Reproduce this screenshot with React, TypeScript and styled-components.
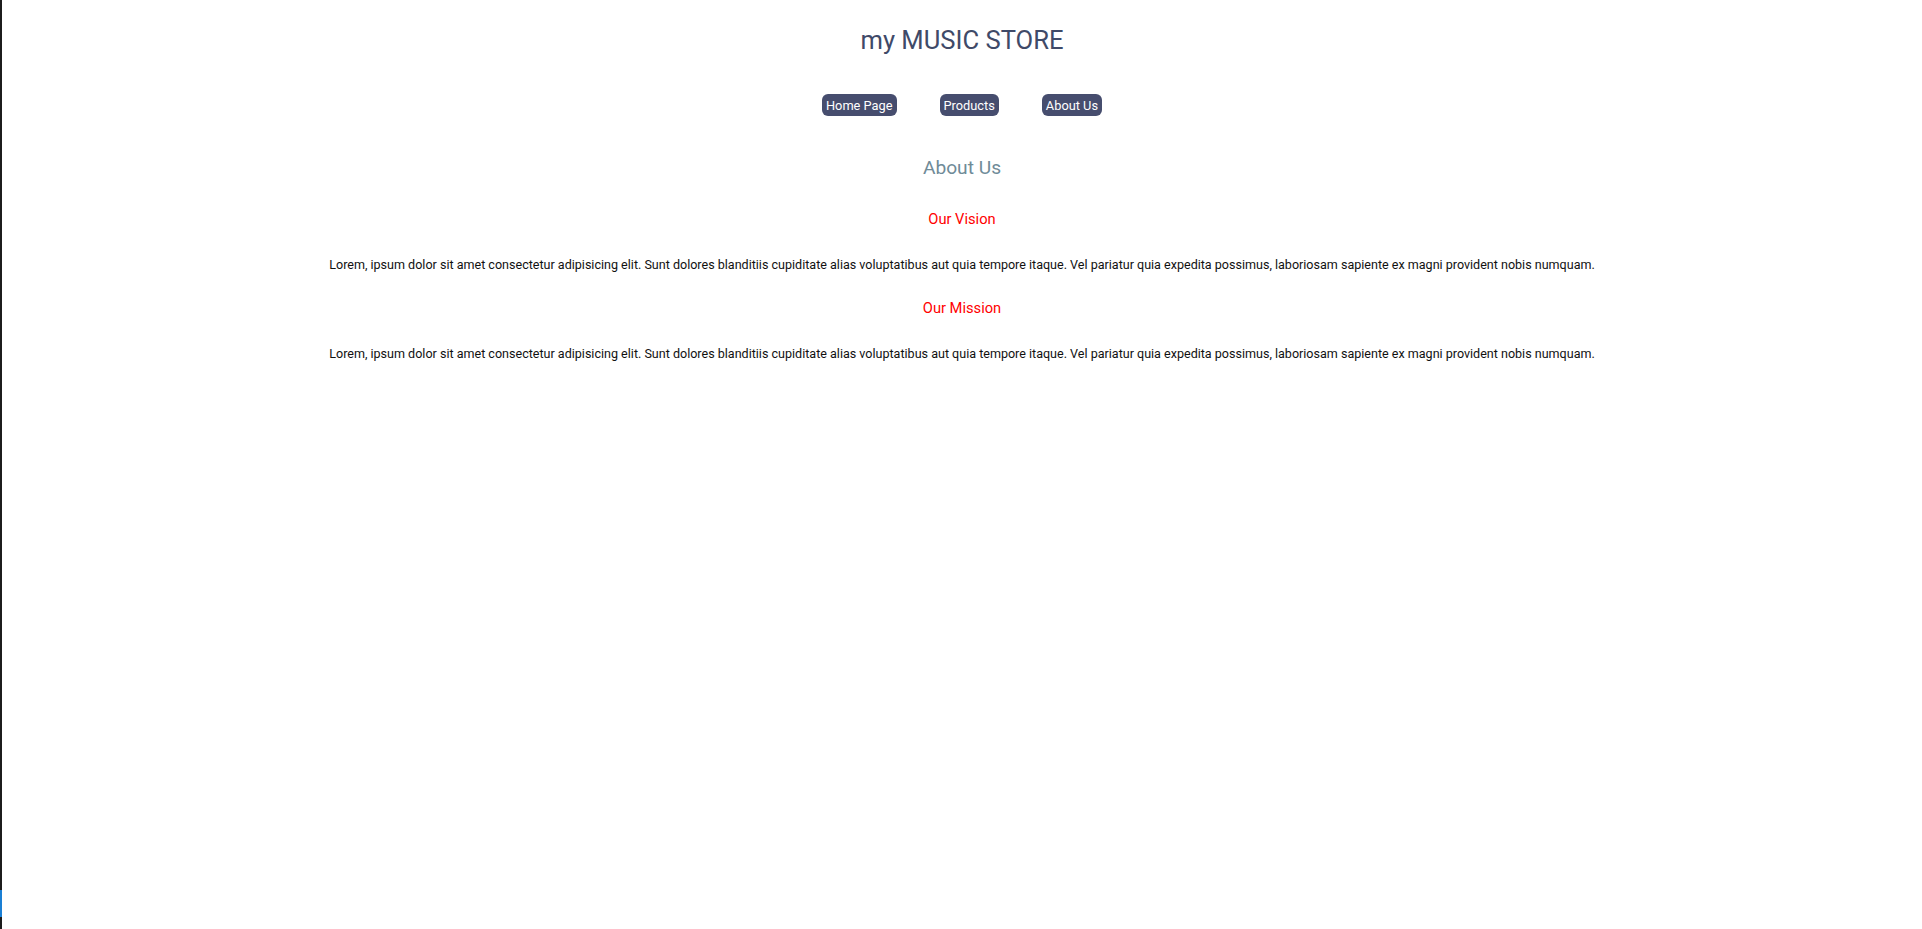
import React from "react";
import styled, { createGlobalStyle } from "styled-components";

const GlobalStyle = createGlobalStyle`
  html, body { margin: 0; padding: 0; background: #ffffff; }
  body {
    font-family: Roboto, "Liberation Sans", Arial, sans-serif;
    border-left: 2px solid #1c1c1c;
    min-height: 929px;
    box-sizing: border-box;
  }
`;

const EdgeMark = styled.div`
  position: fixed;
  left: 0;
  top: 890px;
  width: 2px;
  height: 27px;
  background: #1a7fd4;
`;

const Page = styled.div`
  display: flex;
  flex-direction: column;
  align-items: center;
  padding-top: 25px;
`;

const Title = styled.h1`
  margin: 0;
  font-size: 25.6px;
  line-height: 30px;
  font-weight: 400;
  color: #3f4a68;
`;

const Nav = styled.nav`
  display: flex;
  gap: 43px;
  margin-top: 39px;
`;

const NavButton = styled.a`
  display: inline-flex;
  align-items: center;
  height: 22px;
  padding: 0 4px;
  border-radius: 6px;
  background: #464d6e;
  color: #ffffff;
  font-size: 12.8px;
  text-decoration: none;
  cursor: pointer;
`;

const PageHeading = styled.h2`
  margin: 40px 0 0;
  font-size: 19.2px;
  line-height: 24px;
  font-weight: 400;
  color: #6f8b98;
`;

const SectionHeading = styled.h3`
  margin: 29px 0 0;
  font-size: 14.7px;
  line-height: 20px;
  font-weight: 400;
  color: #ff0000;
`;

const Paragraph = styled.p`
  margin: 28px 0 0;
  font-size: 12.55px;
  line-height: 16px;
  color: #111111;
  text-align: center;
`;

const Section = styled.section`
  display: flex;
  flex-direction: column;
  align-items: center;
  & + & ${SectionHeading} { margin-top: 25px; }
`;

const lorem =
  "Lorem, ipsum dolor sit amet consectetur adipisicing elit. Sunt dolores blanditiis cupiditate alias voluptatibus aut quia tempore itaque. Vel pariatur quia expedita possimus, laboriosam sapiente ex magni provident nobis numquam.";

export default function App() {
  return (
    <>
      <GlobalStyle />
      <EdgeMark />
      <Page>
        <Title>my MUSIC STORE</Title>
        <Nav>
          <NavButton>Home Page</NavButton>
          <NavButton>Products</NavButton>
          <NavButton>About Us</NavButton>
        </Nav>
        <PageHeading>About Us</PageHeading>
        <Section>
          <SectionHeading>Our Vision</SectionHeading>
          <Paragraph>{lorem}</Paragraph>
        </Section>
        <Section>
          <SectionHeading>Our Mission</SectionHeading>
          <Paragraph>{lorem}</Paragraph>
        </Section>
      </Page>
    </>
  );
}
